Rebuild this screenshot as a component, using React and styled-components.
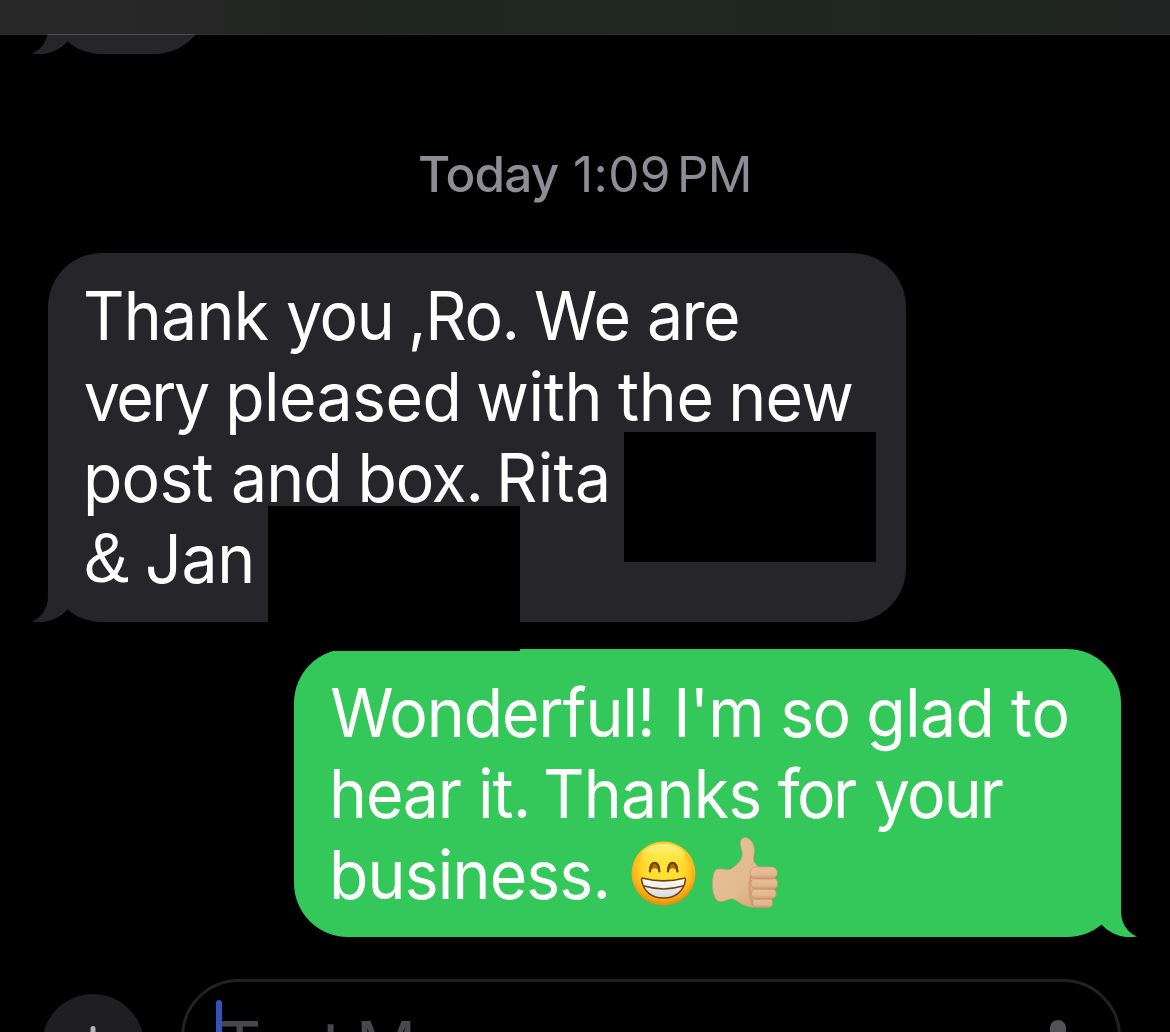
import React from "react"
import styled, { createGlobalStyle } from "styled-components"

const GlobalStyle = createGlobalStyle`
  body {
    margin: 0;
    background: #000;
  }
`

const Screen = styled.div`
  width: 1170px;
  height: 1032px;
  overflow: hidden;
  display: flex;
  flex-direction: column;
  background: #000;
  color: #fff;
  font-family: Inter, "Liberation Sans", sans-serif;
`

const NavBar = styled.div`
  position: relative;
  z-index: 1;
  flex: none;
  height: 34px;
  background: linear-gradient(90deg, #282828 0%, #272727 14%, #222522 25%, #1f2721 38%, #1e2820 68%, #1f2621 86%, #222423 100%);
  box-shadow: 0 1px 0 rgba(255, 255, 255, 0.18);
`

const Thread = styled.div`
  flex: none;
  display: flex;
  flex-direction: column;
`

const Peek = styled.div`
  height: 20px;
  padding-left: 48px;
  overflow: hidden;
  display: flex;
  align-items: flex-end;
`

const Bubble = styled.div`
  position: relative;
  box-sizing: border-box;
  flex: none;
  width: ${(p) => p.$width}px;
  height: ${(p) => p.$height}px;
  padding: ${(p) => (p.$sent ? "23px 0 0 35px" : "22px 0 0 35px")};
  margin: ${(p) => (p.$sent ? "27px 49px 0 auto" : "0")};
  border-radius: 54px;
  background: ${(p) => (p.$sent ? "#34c85a" : "#26252a")};
  color: ${(p) => (p.$sent ? "#34c85a" : "#26252a")};
`

const Received = styled.div`
  padding: 49px 0 0 48px;
`

const TailSvg = styled.svg`
  position: absolute;
  bottom: 0;
  ${(p) => (p.$sent ? "right: -16px; transform: scaleX(-1);" : "left: -16px;")}
`

const Line = styled.div`
  display: flex;
  height: 81px;
  color: #fff;
`

// slightly condensed, Inter runs wide at this size
const Text = styled.div`
  flex: none;
  display: flex;
  font-size: 67px;
  font-weight: 430;
  line-height: 81px;
  white-space: pre;
  transform: scaleX(0.96);
  transform-origin: 0 0;
`

const Word = styled.span`
  letter-spacing: ${(p) => p.$track || 0}px;
  margin-left: ${(p) => p.$gap || 0}px;
`

const Ampersand = styled.span`
  margin-left: 1.2px;
  font-family: "Liberation Sans", sans-serif;
  font-size: 70px;
`

const Redaction = styled.div`
  position: absolute;
  z-index: 2;
  left: ${(p) => p.$x}px;
  top: ${(p) => p.$y}px;
  width: 252px;
  height: ${(p) => p.$h}px;
  background: #000;
`

const Timestamp = styled.div`
  display: flex;
  height: 60px;
  margin-top: 90px;
  padding-left: 418px;
  font-size: 49.5px;
  line-height: 60px;
  color: #8e8d95;

  b {
    width: 140px;
    font-weight: 540;
    letter-spacing: -0.9px;
  }
`

const EmojiSvg = styled.svg`
  flex: none;
  margin-top: ${(p) => p.$top}px;
  margin-left: ${(p) => p.$gap}px;
  overflow: visible;
`

const Composer = styled.div`
  flex: none;
  display: flex;
  height: 53px;
  margin-top: 42px;
  padding: 0 49px 0 42px;
`

const PlusButton = styled.div`
  flex: none;
  display: flex;
  justify-content: center;
  box-sizing: border-box;
  width: 102px;
  height: 102px;
  margin-top: 15px;
  padding-top: 32px;
  border-radius: 50%;
  background: #1f1f21;
`

const Field = styled.div`
  box-sizing: border-box;
  flex: 1;
  display: flex;
  height: 116px;
  margin-left: 37px;
  padding: 18px 52px 0 32px;
  border: 3px solid #222223;
  border-radius: 58px;
`

const Caret = styled.div`
  flex: none;
  z-index: 1;
  width: 6px;
  height: 78px;
  border-radius: 3px;
  background: #3453b9;
`

const Placeholder = styled.div`
  margin: 5px 0 0 -4px;
  font-size: 67px;
  line-height: 81px;
  letter-spacing: -3.3px;
  white-space: pre;
  color: #48474c;
`

const Mic = styled.div`
  flex: none;
  width: 16px;
  height: 50px;
  margin: 20px 0 0 auto;
  border-radius: 8px;
  background: #525255;
`

const Tail = ({ sent }) => (
  <TailSvg $sent={sent} width="66" height="60" viewBox="0 0 66 60">
    <path fill="currentColor" d="M16 0V34C16 46 10 55.5 0 59.5C13 62 26 57.5 35 48L66 20V0Z" />
  </TailSvg>
)

const Grin = () => (
  <EmojiSvg $top={7} $gap={9} width="65" height="65" viewBox="0 0 65 65">
    <defs>
      <radialGradient id="face" cx="50%" cy="40%" r="60%">
        <stop offset="0" stopColor="#ffe638" />
        <stop offset="0.55" stopColor="#ffd92c" />
        <stop offset="0.8" stopColor="#fcb41a" />
        <stop offset="1" stopColor="#ec860c" />
      </radialGradient>
      <linearGradient id="shine" x1="0" y1="0" x2="0" y2="1">
        <stop offset="0" stopColor="#fff8a0" stopOpacity="0.8" />
        <stop offset="1" stopColor="#ffe93e" stopOpacity="0" />
      </linearGradient>
      <linearGradient id="teeth" x1="0" y1="0" x2="0" y2="1">
        <stop offset="0" stopColor="#fff" />
        <stop offset="1" stopColor="#d6d6de" />
      </linearGradient>
    </defs>
    <circle cx="32.5" cy="32.5" r="32" fill="url(#face)" />
    <ellipse cx="32.5" cy="15" rx="22" ry="12" fill="url(#shine)" />
    <g fill="#a96c08">
      <path d="M18 31C18.3 17.5 28.7 17.5 29.3 31C25.5 26 22 26 18 31Z" />
      <path d="M36 31C36.3 17.5 46.7 17.5 47.3 31C43.5 26 40 26 36 31Z" />
    </g>
    <g fill="none" stroke="#704007" strokeWidth="2.2" strokeLinecap="round">
      <path d="M18.9 30.5C19.3 18.8 27.9 18.8 28.4 30.5" />
      <path d="M36.9 30.5C37.3 18.8 45.9 18.8 46.4 30.5" />
    </g>
    <path
      d="M12 37.2C25 40.6 40 40.6 53 37.2C54 37 54.6 37.7 54.4 39C52.8 50.5 44 57 32.5 57C21 57 12.2 50.5 10.6 39C10.4 37.7 11 37 12 37.2Z"
      fill="url(#teeth)"
      stroke="#71430b"
      strokeWidth="1.6"
    />
    <path d="M12.2 44.8C25 48.7 40 48.7 52.8 44.8" fill="none" stroke="#71430b" strokeWidth="1.5" />
  </EmojiSvg>
)

const ThumbsUp = () => (
  <EmojiSvg $top={3} $gap={16} width="66" height="71" viewBox="0 0 66 71">
    <defs>
      <linearGradient id="skin" x1="0" y1="0" x2="1" y2="1">
        <stop offset="0" stopColor="#e6c29b" />
        <stop offset="0.6" stopColor="#e2ba90" />
        <stop offset="1" stopColor="#cf9c70" />
      </linearGradient>
      <linearGradient id="finger" x1="0" y1="0" x2="0" y2="1">
        <stop offset="0" stopColor="#e6c098" />
        <stop offset="0.65" stopColor="#e1b88e" />
        <stop offset="1" stopColor="#cb986e" />
      </linearGradient>
    </defs>
    <path
      d="M29 3C31 -1 37 0 40 5C42.5 9.5 43 14 41.7 19.5C41 24 42.5 27 47 30L60 33L61 60L56 70.3C40 71.5 33 69 28 66C25 64 22 61.5 19.7 61.7C15 62.5 12 64.7 8.7 64.7C3 65 0.5 56 0.4 48C0.5 40 2 33 4.700 32.3C9 31.3 14 33 18 32.5C24 29 29.5 24 30.3 18C30.5 13 27 7 29 3Z"
      fill="url(#skin)"
      stroke="#cb9a6d"
      strokeWidth="0.7"
    />
    <g fill="url(#finger)" stroke="#c08c62" strokeWidth="0.6">
      <rect x="40.5" y="61" width="20.2" height="9.8" rx="4.6" />
      <rect x="39.5" y="51.2" width="24.7" height="11" rx="5" />
      <rect x="39" y="41" width="26.7" height="11.2" rx="5" />
      <rect x="38.2" y="29.8" width="27.2" height="12.2" rx="6" />
    </g>
    <path d="M39 39C36.5 48 37 58 41 68" fill="none" stroke="#c9976c" strokeWidth="2.4" opacity="0.7" />
  </EmojiSvg>
)

// [word, letter-spacing, margin on top of the normal space]
const received = [
  [["Thank", -0.75], ["you", -1.35, -0.5], [",Ro.", -1.4, -3.75], ["We", -0.7, -3], ["are", -1.75, -1.35]],
  [["very", -2.6, 0.8], ["pleased", -0.6, -0.45], ["with", -0.35, -3.25], ["the", -0.3, -2.25], ["new", -0.75, -3.75]],
  [["post", -0.8], ["and", -0.95], ["box.", -1.3, -2.4], ["Rita", 0.25, -4.95]],
  [["&"], ["Jan", -0.3, -2.05]],
]

const sent = [
  [["Wonderful!", -1.1, 1.3], ["I'm", -0.8, 0.75], ["so", -1.7, -1.85], ["glad", -0.65, -1.35], ["to", 0, -1.35]],
  [["hear", -1.2], ["it.", -1, -1.05], ["Thanks", -0.75, -5.65], ["for", -2.8, -1.85], ["your", -1.95, 1.45]],
  [["business.", -0.9]],
]

const Words = ({ words }) => (
  <Text>
    {words.map(([text, track, gap], i) => (
      <React.Fragment key={i}>
        {i > 0 && <span> </span>}
        {text === "&" ? <Ampersand>&amp;</Ampersand> : <Word $track={track} $gap={gap}>{text}</Word>}
      </React.Fragment>
    ))}
  </Text>
)

export default function App() {
  return (
    <Screen>
      <GlobalStyle />
      <NavBar />
      <Thread>
        <Peek>
          <Bubble $width={160} $height={110}>
            <Tail />
          </Bubble>
        </Peek>
        <Timestamp>
          <b>Today</b>
          <Word $gap={15} $track={0.4}>1:09</Word>
          <Word $gap={6} $track={-0.7}>PM</Word>
        </Timestamp>
        <Received>
          <Bubble $width={858} $height={369}>
            <Tail />
            {received.map((words, i) => (
              <Line key={i}><Words words={words} /></Line>
            ))}
            <Redaction $x={576} $y={179} $h={130} />
            <Redaction $x={220} $y={253} $h={145} />
          </Bubble>
        </Received>
        <Bubble $sent $width={827} $height={288}>
          <Tail sent />
          {sent.map((words, i) => (
            <Line key={i}>
              <Words words={words} />
              {i === 2 && <Grin />}
              {i === 2 && <ThumbsUp />}
            </Line>
          ))}
        </Bubble>
      </Thread>
      <Composer>
        <PlusButton>
          <svg width="40" height="40" viewBox="0 0 40 40" stroke="#b4b4b6" strokeWidth="5" strokeLinecap="round">
            <path d="M20 2.5V37.5M2.5 20H37.5" />
          </svg>
        </PlusButton>
        <Field>
          <Caret />
          <Placeholder>Text Message</Placeholder>
          <Mic />
        </Field>
      </Composer>
    </Screen>
  )
}
